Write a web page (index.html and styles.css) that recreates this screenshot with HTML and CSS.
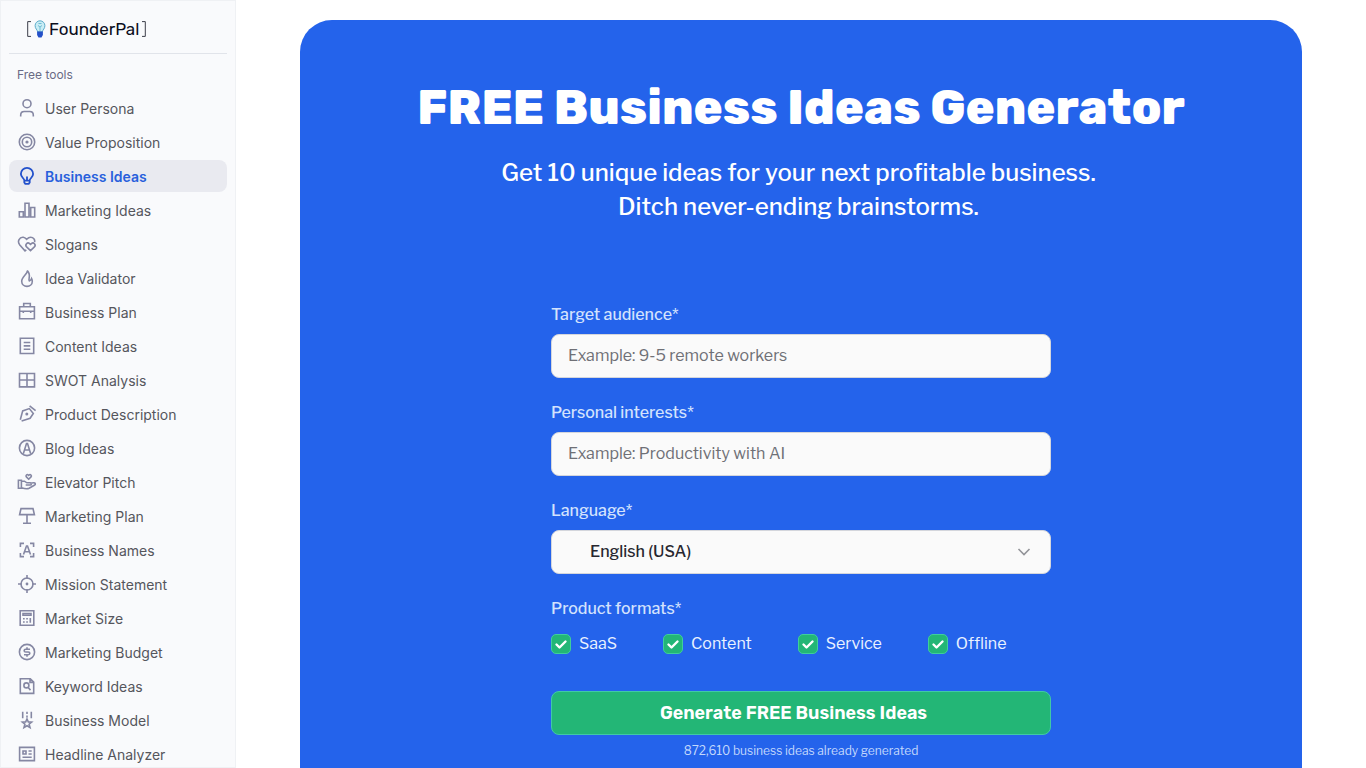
FILE: index.html
```html
<!DOCTYPE html>
<html lang="en">
<head>
<meta charset="utf-8">
<meta name="viewport" content="width=device-width, initial-scale=1">
<title>FREE Business Ideas Generator</title>
<link rel="stylesheet" href="styles.css">
</head>
<body>
<div class="page">
  <aside class="sidebar">
    <a class="logo" href="#">
      <svg class="bracket" viewBox="0 0 4 16" aria-hidden="true"><path d="M4 .6H.7v14.800H4"/></svg>
      <svg class="logo-bulb" viewBox="0 0 12 18" aria-hidden="true"><path d="M3.600 11.800C3.300 9.600 1.100 8.700 1.100 5.700a4.900 4.900 0 0 1 9.800 0c0 3-2.200 3.900-2.500 6.100z" fill="#c9edf5" stroke="#5cabc9"/><path d="M6 11V7L4 5.500M6 7l2-1.500M4.500 3.500h3" fill="none" stroke="#58aeca" stroke-width=".8"/><path d="M3.100 11.500h5.800v3.600L7.500 17.500h-3l-1.400-2.400z" fill="#2450c8"/></svg>
      <span>FounderPal</span>
      <svg class="bracket bracket-end" viewBox="0 0 4 16" aria-hidden="true"><path d="M0 .6h3.300v14.800H0"/></svg>
    </a>
    <h2 class="group-title">Free tools</h2>
    <nav class="nav" aria-label="Free tools">
      <a href="#"><svg viewBox="0 0 20 20"><circle cx="10" cy="5.700" r="4"/><path d="M3.700 18.500V17c0-2 1.500-3.500 3.500-3.500h5.600c2 0 3.500 1.500 3.500 3.500v1.500"/></svg>User Persona</a>
      <a href="#"><svg viewBox="0 0 20 20"><circle cx="10" cy="10" r="7.700"/><circle cx="10" cy="10" r="4.700"/><circle class="solid" cx="10" cy="10" r="1.600"/></svg>Value Proposition</a>
      <a href="#" class="active" aria-current="page"><svg viewBox="0 0 20 20"><path d="M7.300 14.200C7 12.300 3.900 11 3.900 7.900a6.100 6.100 0 0 1 12.200 0c0 3.100-3.100 4.400-3.400 6.300M10 10.500v4M7.300 14.600h5.400v1.800l-1 1.400H8.300l-1-1.400z"/></svg>Business Ideas</a>
      <a href="#"><svg viewBox="0 0 20 20"><path d="M2.300 11.700h4v5.300h-4zM8 3.300h4V17H8zM13.700 7.500h4V17h-4z"/></svg>Marketing Ideas</a>
      <a href="#"><svg viewBox="0 0 20 20"><path d="M9.300 15.800 8 16.800 2.800 11C-.2 7.400 2.600 2.900 6.300 3.300 8 3.500 8.800 4.400 9.700 5.300c1-1 2-2 3.900-2 2.800 0 4.600 2.200 4 4.900"/><path d="m13.500 16.600-3.900-3.700c-2-2.200.8-5.200 3-3.300l.9.800.9-.8c2.200-1.900 5 1.100 3 3.300z"/></svg>Slogans</a>
      <a href="#"><svg viewBox="0 0 20 20"><path d="M10.300 2.600c.8 3-5.600 5.800-5.600 10.600 0 3.100 2.400 5.200 5.300 5.200s5.300-2.100 5.300-5.200c0-1-.3-1.800-.7-2.600-.4 1.300-1.200 2-2.300 2.300-1.500-2.300 2.400-5.700-2-10.300z"/></svg>Idea Validator</a>
      <a href="#"><svg viewBox="0 0 20 20"><path d="M2.600 4.700h14.800v12.100H2.600zM6.700 4.700V1.500h6.600v3.200M2.600 9.300h14.800M6.300 8.700v2.300M13.700 8.700v2.300"/></svg>Business Plan</a>
      <a href="#"><svg viewBox="0 0 20 20"><path d="M3.300 2.300h13.400v15.200H3.300zM6.700 6.500h6.600M6.700 9.900h6.600M6.700 13.200h6.600"/></svg>Content Ideas</a>
      <a href="#"><svg viewBox="0 0 20 20"><path d="M2.500 3.500h15v13.400h-15zM10 3.500v13.400M2.500 10h15"/></svg>SWOT Analysis</a>
      <a href="#"><svg viewBox="0 0 20 20"><path d="M3.300 15.800 5.700 6.900l6.600-2.300 4 4.900-3.200 4.700-8.500 2.700M12.600 1.900l6 4.800"/><circle class="solid" cx="9.800" cy="9.900" r="1.500"/></svg>Product Description</a>
      <a href="#"><svg viewBox="0 0 20 20"><circle cx="10" cy="10" r="7.600"/><path d="M6.300 15.800 9.500 5.500h1l3.200 10.300M8 12h4"/></svg>Blog Ideas</a>
      <a href="#"><svg viewBox="0 0 20 20"><path d="M1.400 8.300h3v7.900h-3zM4.400 9.200h3l2.500 1.600h3.300c1.500 0 1.500 2.200 0 2.200H8.700M13.300 11.300l3.300-.5c1.900-.1 2.400 1.600.7 2.400l-5.200 3.100c-2 .9-5 .3-7.700-.6M11.700 7.200 9.400 4.900c-1.200-1.400.7-3.100 1.900-1.900l.4.400.4-.4c1.200-1.200 3.100.5 1.900 1.900z"/></svg>Elevator Pitch</a>
      <a href="#"><svg viewBox="0 0 20 20"><path d="M4 2.600h12l1.400 6H2.600zM10 8.600v8.700M6 17.300h8"/></svg>Marketing Plan</a>
      <a href="#"><svg viewBox="0 0 20 20"><path d="M3.400 7V3.400H7M13 3.400h3.600V7M16.600 13v3.600H13M7 16.600H3.400V13M6.500 14.500 9.500 6h1l3 8.500M7.600 11.700h4.800"/></svg>Business Names</a>
      <a href="#"><svg viewBox="0 0 20 20"><circle cx="10" cy="10" r="6"/><circle class="solid" cx="10" cy="10" r="1.400"/><path d="M10 1v4M10 15v4M1 10h4M15 10h4"/></svg>Mission Statement</a>
      <a href="#"><svg viewBox="0 0 20 20"><path d="M3.200 2.800h13.600v14.400H3.200zM6 5.500h8v1.800H6zM6 10.800h1.700M9.200 10.800h1.700M6 14h1.700M9.200 14h1.700M13.300 10v4.700"/></svg>Market Size</a>
      <a href="#"><svg viewBox="0 0 20 20"><circle cx="10" cy="10" r="7.600"/><path d="M13 7.300H8.800c-2.200 0-2.200 2.700 0 2.700h2.400c2.200 0 2.200 2.700 0 2.700H7M10 5.300v2M10 12.700v2"/></svg>Marketing Budget</a>
      <a href="#"><svg viewBox="0 0 20 20"><path d="M3.300 2.800h10l3.400 3.400v11.200H3.300zM13 2.800v3.600h3.700M11.200 11.500l2.300 2.600"/><circle cx="9.400" cy="9.400" r="2.500"/></svg>Keyword Ideas</a>
      <a href="#"><svg viewBox="0 0 20 20"><path d="M5.700 1.700v6.600M10 1.700V4M10 5.500v2M14.300 1.700v6.600M10 9l1.300 2.900 3.300.2-2.500 2.100.9 3.300-3-1.800-3 1.800.9-3.300-2.500-2.100 3.300-.2z"/></svg>Business Model</a>
      <a href="#"><svg viewBox="0 0 20 20"><path d="M2.600 3.400h14.800v13.200H2.600zM6 7h3v3H6zM11.500 7h3.200M11.500 10h3.200M5.500 13.200h9.200"/></svg>Headline Analyzer</a>
    </nav>
  </aside>

  <main class="main">
    <section class="hero">
      <h1 class="title">FREE Business Ideas Generator</h1>
      <p class="subtitle">Get 10 unique ideas for your next profitable business.<br>Ditch never-ending brainstorms.</p>
      <form class="form">
        <div class="field">
          <label for="audience">Target audience*</label>
          <input class="control" id="audience" type="text" placeholder="Example: 9-5 remote workers">
        </div>
        <div class="field">
          <label for="interests">Personal interests*</label>
          <input class="control" id="interests" type="text" placeholder="Example: Productivity with AI">
        </div>
        <div class="field">
          <label for="language">Language*</label>
          <select class="control select" id="language"><option>English (USA)</option></select>
        </div>
        <fieldset class="formats">
          <legend>Product formats*</legend>
          <div class="checks">
            <label><input type="checkbox" checked>SaaS</label>
            <label><input type="checkbox" checked>Content</label>
            <label><input type="checkbox" checked>Service</label>
            <label><input type="checkbox" checked>Offline</label>
          </div>
        </fieldset>
        <button class="submit" type="button">Generate FREE Business Ideas</button>
        <p class="count">872,610 business ideas already generated</p>
      </form>
    </section>
  </main>
</div>
</body>
</html>
```
FILE: styles.css
```css
* { box-sizing: border-box; }
body { margin: 0; background: #fff; font-family: "Libre Franklin", "Open Sans", sans-serif; font-size: 16px; line-height: 24px; }
.page { display: flex; align-items: flex-start; }

.sidebar {
  position: sticky; top: 0; flex: 0 0 236px; height: 100vh;
  padding: 0 8px; overflow-y: auto; scrollbar-width: none;
  background: #f9fafc; border: 1px solid #eff1f4;
  font-family: Inter, sans-serif;
}
.logo {
  display: flex; align-items: center; height: 53px; padding: 4px 0 0 18px;
  border-bottom: 1px solid #e1e4ea; color: #0b0d1c; text-decoration: none;
  font-family: Rubik, Inter, sans-serif; font-size: 17px; font-weight: 400;
}
.bracket { width: 4px; height: 16px; fill: none; stroke: #3c3e49; stroke-width: 1; }
.bracket-end { margin-left: 3px; }
.logo-bulb { width: 12px; height: 18px; margin: 0 3px; }
.group-title { margin: 11px 0 8px; padding-left: 8px; font-size: 12px; line-height: 19px; font-weight: 400; color: #6a6a85; }
.nav { display: flex; flex-direction: column; gap: 2px; }
.nav a {
  display: flex; align-items: center; gap: 8px; flex: none; height: 32px; padding: 1px 8px 0;
  border-radius: 8px; color: #55565c; font-size: 14px; text-decoration: none;
}
.nav svg { width: 20px; height: 20px; margin-bottom: 1px; fill: none; stroke: #8587a3; stroke-width: 1.6; }
.nav .solid { fill: #8587a3; stroke: none; }
.nav .active { background: #e9eaf0; color: #2860dc; font-weight: 600; }
.nav .active svg { stroke: #2351cb; stroke-width: 1.8; }

.main { flex: 1; min-width: 0; padding: 20px 64px; }
.hero {
  display: flex; flex-direction: column; align-items: center;
  padding: 60px 32px 64px; border-radius: 32px; background: #2463eb; color: #fff;
}
.title { margin: 0; font-family: Rubik, Inter, sans-serif; font-size: 48px; line-height: 56px; font-weight: 800; text-align: center; }
.subtitle { margin: 20px 0 79px; padding-right: 5px; font-size: 24px; line-height: 34px; font-weight: 500; text-align: center; }
.form { width: 100%; max-width: 500px; }
.field { display: flex; flex-direction: column; gap: 7px; margin-bottom: 23px; color: #d3e2fd; }
.field label, .formats legend { font-weight: 500; }
.control {
  width: 100%; height: 44px; padding: 0 16px 1px; border: 1px solid #d4d6dc; border-radius: 8px;
  background: #fafafa; color: #27272f; font: inherit;
}
.control::placeholder { color: #6f7076; opacity: 1; }
.select {
  appearance: none; padding-bottom: 0; padding-left: 38px; font-weight: 500;
  background: #fafafa url("data:image/svg+xml,%3Csvg xmlns='http://www.w3.org/2000/svg' width='14' height='10' fill='none' stroke='%23939499' stroke-width='1.6'%3E%3Cpath d='M1.500 2 7 7.500 12.500 2'/%3E%3C/svg%3E") no-repeat right 19px center;
}
.formats { margin: 0; padding: 0; border: 0; }
.formats legend { padding: 0; color: #d3e2fd; }
.checks { display: flex; flex-wrap: wrap; gap: 12px 46px; margin: 11px 0 35px; }
.checks label { display: flex; align-items: center; gap: 8px; color: #eaf2ff; }
.checks input {
  appearance: none; width: 20px; height: 20px; margin: 0; border: 1px solid #3fcf9b; border-radius: 5px;
  background: #23b676 url("data:image/svg+xml,%3Csvg xmlns='http://www.w3.org/2000/svg' width='18' height='18' fill='none' stroke='white' stroke-width='2.4' stroke-linecap='round' stroke-linejoin='round'%3E%3Cpath d='M4.500 9.500 7.500 12.500 13.500 6.500'/%3E%3C/svg%3E") center no-repeat;
}
.submit {
  display: block; width: 100%; height: 44px; padding: 0 20px 0 5px; border: 1px solid #40c9a6; border-radius: 8px;
  background: #23b676; color: #fff; font-family: Rubik, Inter, sans-serif; font-size: 18px; font-weight: 600; cursor: pointer;
}
.count { margin: 6px 0 0; font-size: 12px; line-height: 20px; text-align: center; color: #c3d8fc; }
```
